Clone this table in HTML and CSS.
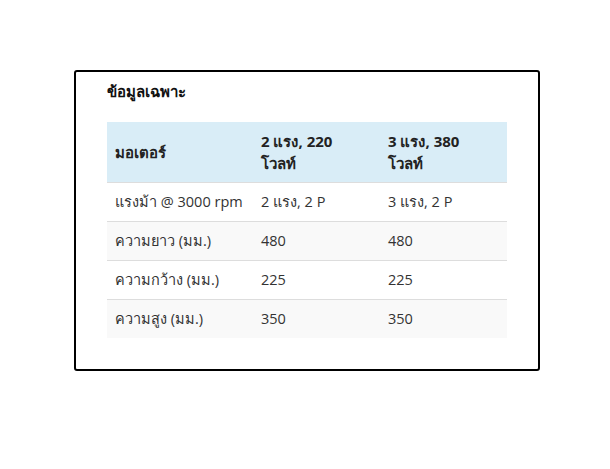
FILE: index.html
```html
<!DOCTYPE html>
<html lang="th">
<head>
<meta charset="utf-8">
<link rel="stylesheet" href="styles.css">
</head>
<body>
<div class="card">
  <h3 class="title">ข้อมูลเฉพาะ</h3>
  <table class="spec">
    <thead>
      <tr>
        <th class="c1">มอเตอร์</th>
        <th class="c2">2 แรง, 220 โวลท์</th>
        <th class="c3">3 แรง, 380 โวลท์</th>
      </tr>
    </thead>
    <tbody>
      <tr><td>แรงม้า @ 3000 rpm</td><td>2 แรง, 2 P</td><td>3 แรง, 2 P</td></tr>
      <tr><td>ความยาว (มม.)</td><td>480</td><td>480</td></tr>
      <tr><td>ความกว้าง (มม.)</td><td>225</td><td>225</td></tr>
      <tr><td>ความสูง (มม.)</td><td>350</td><td>350</td></tr>
    </tbody>
  </table>
</div>
</body>
</html>
```
FILE: styles.css
```css
html, body {
  margin: 0;
  padding: 0;
  background: #fff;
}
body {
  font-family: "Open Sans", "Noto Sans", sans-serif;
  font-size: 14px;
  color: #333;
}
.card {
  margin: 70px 0 0 74px;
  width: 400px;
  border: 2px solid #000;
  border-radius: 3px;
  padding: 8px 31px 31px 31px;
}
.title {
  margin: 0 0 20px 0;
  font-size: 15px;
  line-height: 22px;
  font-weight: bold;
  color: #111;
}
.spec {
  width: 400px;
  border-collapse: collapse;
  table-layout: fixed;
}
.spec th, .spec td {
  text-align: left;
  vertical-align: middle;
  padding: 8px 8px;
  line-height: 22px;
}
.spec td {
  font-size: 14.5px;
  white-space: nowrap;
  border-top: 1px solid #ddd;
}
.spec th {
  background: #d9edf7;
  font-size: 15px;
  font-weight: bold;
  color: #222;
  padding-right: 20px;
  border-bottom: 1px solid #ddd;
}
.spec .c1 { width: 118px; }
.spec .c2 { width: 99px; }
.spec .c3 { width: 99px; }
.spec tbody tr:first-child td { border-top: 0; }
.spec tbody tr:nth-child(even) td { background: #f9f9f9; }
```
